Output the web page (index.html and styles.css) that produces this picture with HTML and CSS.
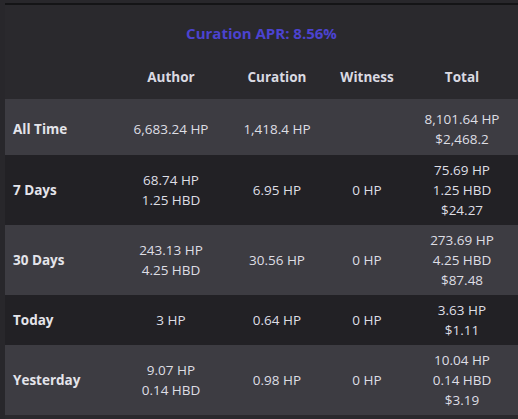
FILE: index.html
```html
<!DOCTYPE html>
<html>
<head>
<meta charset="utf-8">
<link rel="stylesheet" href="styles.css">
</head>
<body>
<div class="panel">
  <h2 class="apr">Curation APR: 8.56%</h2>
  <div class="table">
    <div class="row head">
      <div class="cell"></div>
      <div class="cell">Author</div>
      <div class="cell">Curation</div>
      <div class="cell">Witness</div>
      <div class="cell">Total</div>
    </div>
    <div class="row light first">
      <div class="cell label">All Time</div>
      <div class="cell">6,683.24 HP</div>
      <div class="cell">1,418.4 HP</div>
      <div class="cell"></div>
      <div class="cell">8,101.64 HP<br>$2,468.2</div>
    </div>
    <div class="row dark">
      <div class="cell label">7 Days</div>
      <div class="cell">68.74 HP<br>1.25 HBD</div>
      <div class="cell">6.95 HP</div>
      <div class="cell">0 HP</div>
      <div class="cell">75.69 HP<br>1.25 HBD<br>$24.27</div>
    </div>
    <div class="row light">
      <div class="cell label">30 Days</div>
      <div class="cell">243.13 HP<br>4.25 HBD</div>
      <div class="cell">30.56 HP</div>
      <div class="cell">0 HP</div>
      <div class="cell">273.69 HP<br>4.25 HBD<br>$87.48</div>
    </div>
    <div class="row dark">
      <div class="cell label">Today</div>
      <div class="cell">3 HP</div>
      <div class="cell">0.64 HP</div>
      <div class="cell">0 HP</div>
      <div class="cell">3.63 HP<br>$1.11</div>
    </div>
    <div class="row light">
      <div class="cell label">Yesterday</div>
      <div class="cell">9.07 HP<br>0.14 HBD</div>
      <div class="cell">0.98 HP</div>
      <div class="cell">0 HP</div>
      <div class="cell">10.04 HP<br>0.14 HBD<br>$3.19</div>
    </div>
  </div>
</div>
</body>
</html>
```
FILE: styles.css
```css
html, body {
  margin: 0;
  padding: 0;
  background: #28272b;
  height: 100%;
}
body {
  font-family: "Open Sans", "Noto Sans", sans-serif;
  font-size: 13.5px;
  color: #dedee4;
  padding-top: 3px;
  box-sizing: border-box;
}
.panel {
  margin-left: 5px;
  border-top: 2px solid #141416;
  background: #2a292d;
  min-height: 414px;
}
.apr {
  margin: 0;
  padding: 18px 0 14px;
  line-height: 20px;
  font-size: 15px;
  font-weight: 700;
  text-align: center;
  color: #4c43d0;
}
.row {
  display: grid;
  grid-template-columns: 105px 122px 90px 90px 100px;
  line-height: 20px;
  padding: 5px 0;
}
.row.head {
  padding: 10px 0 12px;
  font-weight: 700;
  color: #dadae2;
}
.row.first {
  padding: 10px 0 6px;
}
.light { background: #3d3c42; }
.dark { background: #222125; }
.cell {
  text-align: center;
  display: flex;
  flex-direction: column;
  justify-content: center;
}
.cell.label {
  text-align: left;
  padding-left: 8px;
  font-weight: 700;
  color: #e4e4ea;
}
```
